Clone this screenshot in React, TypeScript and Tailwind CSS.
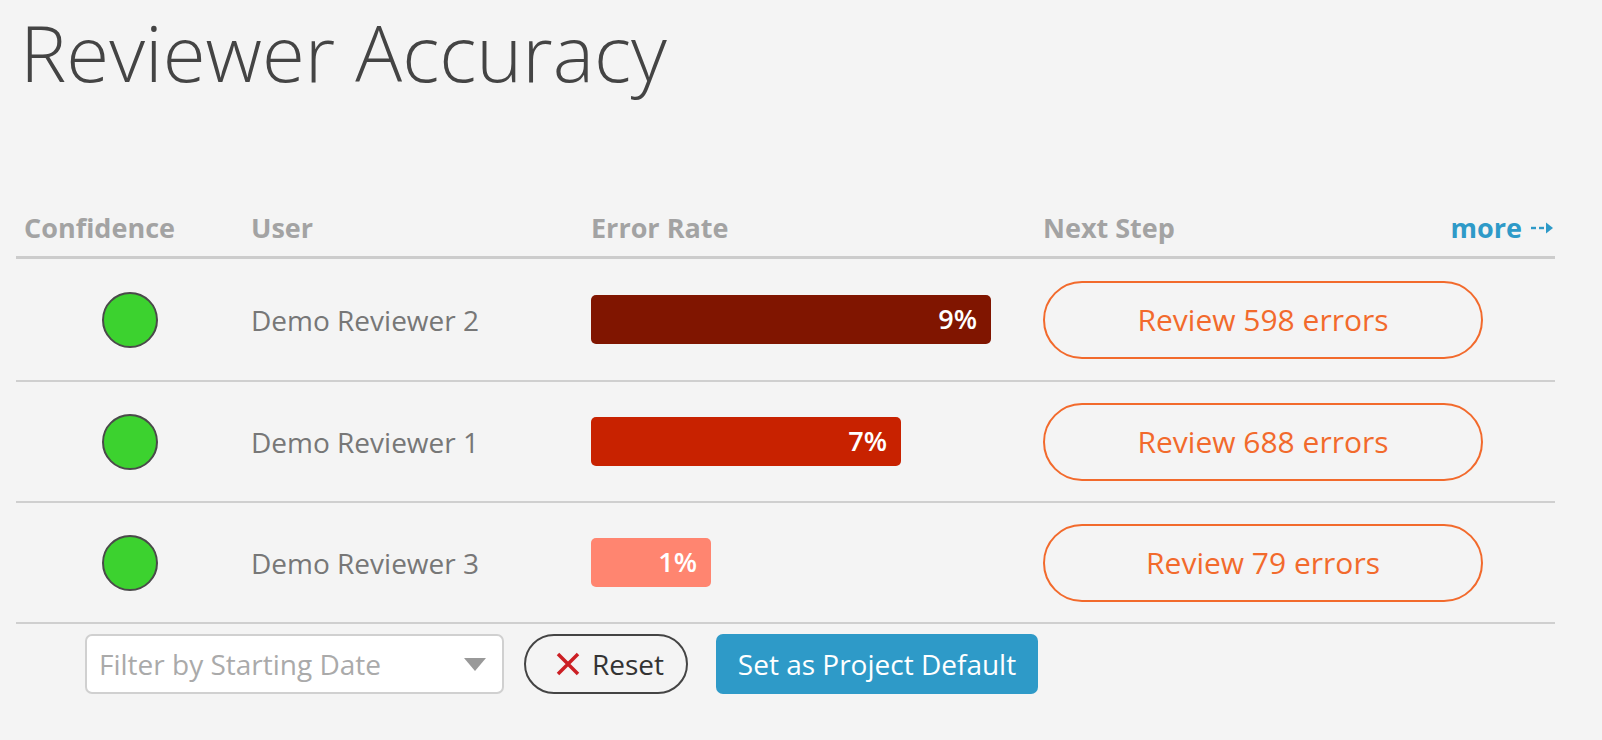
import React from "react";

const rows = [
  { name: "Demo Reviewer 2", pct: "9%", w: 400, color: "bg-[#801500]", errors: 598, h: "h-[123px]" },
  { name: "Demo Reviewer 1", pct: "7%", w: 310, color: "bg-[#c82200]", errors: 688, h: "h-[121px]" },
  { name: "Demo Reviewer 3", pct: "1%", w: 120, color: "bg-[#ff8570]", errors: 79, h: "h-[121px]" },
];

function DashedArrow() {
  return (
    <svg width="24" height="14" viewBox="0 0 24 14" className="ml-[9px]">
      <line x1="0" y1="7" x2="5" y2="7" stroke="#2e9ac8" strokeWidth="2.4" />
      <line x1="8" y1="7" x2="13" y2="7" stroke="#2e9ac8" strokeWidth="2.4" />
      <path d="M15 1.5 L22 7 L15 12.5 Z" fill="#2e9ac8" />
    </svg>
  );
}

export default function App() {
  return (
    <div className="min-h-screen w-full bg-[#f4f4f4] font-['Open_Sans',sans-serif]">
      <h1 className="pl-[20px] pt-[13px] text-[78px] font-light leading-[78px] text-[#444444]">
        Reviewer Accuracy
      </h1>

      <div className="ml-[16px] mr-[47px] mt-[109px]">
        {/* header */}
        <div className="grid h-[59px] grid-cols-[227px_340px_452px_1fr] items-center border-b-[3px] border-[#cccccc] text-[27px] font-bold text-[#a3a3a3]">
          <div className="pl-[8px]">Confidence</div>
          <div className="pl-[8px]">User</div>
          <div className="pl-[8px]">Error Rate</div>
          <div className="flex items-center justify-between pl-[8px]">
            <span>Next Step</span>
            <a className="flex items-center font-bold text-[#2e9ac8]">
              more
              <DashedArrow />
            </a>
          </div>
        </div>

        {rows.map((r) => (
          <div
            key={r.name}
            className={`grid ${r.h} grid-cols-[227px_340px_452px_1fr] items-center border-b-2 border-[#cfcfcf]`}
          >
            <div className="flex justify-center">
              <div className="h-[56px] w-[56px] rounded-full border-2 border-[#4a4a4a] bg-[#3cd22f]" />
            </div>
            <div className="pl-[8px] text-[28px] text-[#777777]">{r.name}</div>
            <div className="pl-[8px]">
              <div
                className={`flex h-[49px] items-center justify-end rounded-[5px] pr-[14px] text-[27px] font-semibold text-white ${r.color}`}
                style={{ width: r.w }}
              >
                {r.pct}
              </div>
            </div>
            <div className="pl-[8px]">
              <button className="flex h-[78px] w-[440px] items-center justify-center rounded-full border-2 border-[#f26a2c] text-[30px] text-[#f26a2c]">
                Review {r.errors} errors
              </button>
            </div>
          </div>
        ))}

        {/* controls */}
        <div className="mt-[10px] flex items-center pl-[69px]">
          <div className="flex h-[60px] w-[419px] items-center justify-between rounded-[7px] border-2 border-[#d0d0d0] bg-white pl-[12px] pr-[16px] text-[28px] text-[#aaaaaa]">
            <span>Filter by Starting Date</span>
            <svg width="22" height="13" viewBox="0 0 22 13">
              <path d="M0 0 L22 0 L11 13 Z" fill="#999999" />
            </svg>
          </div>
          <button className="ml-[20px] flex h-[60px] w-[164px] items-center justify-center rounded-full border-2 border-[#444444] pl-[8px] text-[28px] text-[#333333]">
            <svg width="24" height="24" viewBox="0 0 24 24" className="mr-[12px]">
              <path d="M2 2 L22 22 M22 2 L2 22" stroke="#cc1f24" strokeWidth="3.5" />
            </svg>
            Reset
          </button>
          <button className="ml-[28px] flex h-[60px] w-[322px] items-center justify-center rounded-[7px] bg-[#2e9ac8] text-[28px] text-white">
            Set as Project Default
          </button>
        </div>
      </div>
    </div>
  );
}
